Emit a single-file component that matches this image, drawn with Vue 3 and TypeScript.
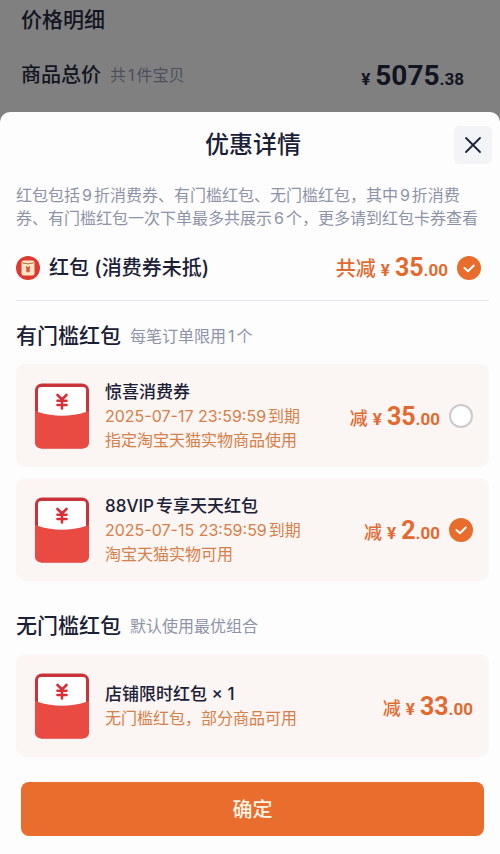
<script setup lang="ts">
import { ref } from 'vue'

interface Coupon {
  id: string
  title: string
  lines: string[]
  whole: string
  cents: string
}

const thresholdCoupons: Coupon[] = [
  {
    id: 'surprise',
    title: '惊喜消费券',
    lines: ['2025-07-17 23:59:59到期', '指定淘宝天猫实物商品使用'],
    whole: '35',
    cents: '.00',
  },
  {
    id: 'vip',
    title: '88VIP专享天天红包',
    lines: ['2025-07-15 23:59:59到期', '淘宝天猫实物可用'],
    whole: '2',
    cents: '.00',
  },
]

const openCoupons: Coupon[] = [
  {
    id: 'shop',
    title: '店铺限时红包 × 1',
    lines: ['无门槛红包，部分商品可用'],
    whole: '33',
    cents: '.00',
  },
]

const useRedPacket = ref(true)
const selected = ref('vip')
</script>

<template>
  <div class="screen">
    <section class="summary">
      <h2 class="summary-title">价格明细</h2>
      <div class="summary-row">
        <span class="summary-label">商品总价</span>
        <span class="summary-count">共1件宝贝</span>
        <span class="price total"><span class="yen">¥</span><span class="whole">5075</span><span class="cents">.38</span></span>
      </div>
    </section>

    <main class="sheet">
      <header class="sheet-head">
        <h1>优惠详情</h1>
        <button class="close" type="button" aria-label="关闭">
          <svg width="18" height="18" viewBox="0 0 18 18" fill="none" stroke="#1c2338" stroke-width="1.800" stroke-linecap="round">
            <path d="M2 2 16 16M16 2 2 16" />
          </svg>
        </button>
      </header>

      <p class="note">红包包括9折消费券、有门槛红包、无门槛红包，其中9折消费券、有门槛红包一次下单最多共展示6个，更多请到红包卡券查看</p>

      <label class="packet-row">
        <svg class="packet-icon" width="24" height="24" viewBox="0 0 24 24">
          <circle cx="12" cy="12" r="12" fill="#dc3a30" />
          <rect x="5.500" y="4.500" width="13" height="15" rx="2" fill="#fde6c4" />
          <path d="M6 6.800Q12 9 18 6.800" fill="none" stroke="#b5683f" stroke-width="1" />
          <path d="M10 10.500 12 12.600 14 10.500M12 12.600V16.500M10 13H14M10 14.900H14" fill="none" stroke="#dc3a30" stroke-width="1.200" />
        </svg>
        <span class="packet-name">红包 (消费券未抵)</span>
        <span class="price large"><span class="verb">共减</span><span class="yen">¥</span><span class="whole">35</span><span class="cents">.00</span></span>
        <span class="tick">
          <input v-model="useRedPacket" type="checkbox" />
          <svg v-if="useRedPacket" viewBox="0 0 24 24"><path d="M7.500 12 11 15.200 16.800 9.500" /></svg>
        </span>
      </label>

      <section class="group">
        <div class="group-head">
          <h2>有门槛红包</h2>
          <span>每笔订单限用1个</span>
        </div>
        <label v-for="c in thresholdCoupons" :key="c.id" class="card">
          <svg class="envelope" width="56" height="66" viewBox="0 0 56 66">
            <rect x="1" y="0.500" width="54" height="65" rx="7" fill="#c9343a" />
            <path d="M1 28Q28 36 55 28V58.500Q55 65.500 48 65.500H8Q1 65.500 1 58.500Z" fill="#e94b43" />
            <path d="M4 7Q4 4 7 4H49Q52 4 52 7V29Q28 36.500 4 29Z" fill="#fff" />
            <path d="M23.500 12 28 16.500 32.500 12M28 17V25.500M23.500 17.800H32.500M23.500 22H32.500" fill="none" stroke="#d92f39" stroke-width="2.600" stroke-linecap="round" />
          </svg>
          <span class="info">
            <strong>{{ c.title }}</strong>
            <span v-for="line in c.lines" :key="line">{{ line }}</span>
          </span>
          <span class="price"><span class="verb">减</span><span class="yen">¥</span><span class="whole">{{ c.whole }}</span><span class="cents">{{ c.cents }}</span></span>
          <span class="tick">
            <input v-model="selected" type="radio" name="threshold" :value="c.id" />
            <svg v-if="selected === c.id" viewBox="0 0 24 24"><path d="M7.500 12 11 15.200 16.800 9.500" /></svg>
          </span>
        </label>
      </section>

      <section class="group">
        <div class="group-head">
          <h2>无门槛红包</h2>
          <span>默认使用最优组合</span>
        </div>
        <article v-for="c in openCoupons" :key="c.id" class="card">
          <svg class="envelope" width="56" height="66" viewBox="0 0 56 66">
            <rect x="1" y="0.500" width="54" height="65" rx="7" fill="#c9343a" />
            <path d="M1 28Q28 36 55 28V58.500Q55 65.500 48 65.500H8Q1 65.500 1 58.500Z" fill="#e94b43" />
            <path d="M4 7Q4 4 7 4H49Q52 4 52 7V29Q28 36.500 4 29Z" fill="#fff" />
            <path d="M23.500 12 28 16.500 32.500 12M28 17V25.500M23.500 17.800H32.500M23.500 22H32.500" fill="none" stroke="#d92f39" stroke-width="2.600" stroke-linecap="round" />
          </svg>
          <span class="info">
            <strong>{{ c.title }}</strong>
            <span v-for="line in c.lines" :key="line">{{ line }}</span>
          </span>
          <span class="price"><span class="verb">减</span><span class="yen">¥</span><span class="whole">{{ c.whole }}</span><span class="cents">{{ c.cents }}</span></span>
        </article>
      </section>

      <button class="confirm" type="button">确定</button>
    </main>
  </div>
</template>

<style>
body {
  background: #808080;
}
</style>

<style scoped>
.screen {
  display: flex;
  flex-direction: column;
  min-height: 100vh;
  box-sizing: border-box;
  background: #808080;
  color: #1a2036;
  font-family: Inter, "Noto Sans CJK SC", sans-serif;
  font-size: 16px;
  line-height: 24px;
  text-autospace: normal;
}
h1,
h2,
p {
  margin: 0;
  font-weight: 500;
}
.summary {
  padding: 4px 36px 18px 21px;
  color: #12141f;
}
.summary-title {
  font-size: 21px;
  line-height: 32px;
}
.summary-row {
  display: flex;
  align-items: center;
  gap: 9px;
  margin-top: 20px;
  height: 38px;
}
.summary-label {
  font-size: 20px;
  font-weight: 500;
}
.summary-count {
  color: #4c505c;
}
.price {
  display: flex;
  align-items: baseline;
  margin-left: auto;
  padding-top: 4px;
  color: #e26a31;
  font-family: Roboto, "Noto Sans CJK SC", sans-serif;
  font-weight: 700;
  white-space: nowrap;
}
.verb {
  margin-right: 5px;
  font-size: 18px;
  font-weight: 500;
}
.yen {
  margin-right: 5px;
  font-size: 17px;
}
.whole {
  font-size: 25px;
}
.cents {
  font-size: 17px;
}
.large .verb {
  font-size: 20px;
}
.total {
  color: #12141f;
}
.total .whole {
  font-size: 28px;
}
.sheet {
  flex: 1;
  padding: 14px 11px 18px 16px;
  border-radius: 10px 10px 0 0;
  background: #fdfdfd;
}
.sheet-head {
  display: grid;
  grid-template-columns: 36px 1fr 38px;
  align-items: center;
  margin: 0 -3px 20px 0;
}
.sheet-head h1 {
  grid-column: 2;
  font-size: 24px;
  line-height: 38px;
  text-align: center;
}
.close {
  display: grid;
  place-items: center;
  width: 38px;
  height: 38px;
  padding: 0;
  border: 0;
  border-radius: 5px;
  background: #f2f4f7;
}
.note {
  color: #8d93a8;
  font-weight: 400;
  line-height: 23px;
}
.packet-row {
  display: flex;
  align-items: center;
  height: 64px;
  padding: 6px 8px 0 0;
  border-bottom: 1px solid #e6e7ea;
}
.packet-name {
  margin-left: 9px;
  font-size: 20px;
  font-weight: 500;
}
.packet-row .price {
  padding-top: 2px;
}
.tick {
  display: grid;
  width: 24px;
  height: 24px;
  margin-left: 9px;
}
.tick input,
.tick svg {
  grid-area: 1 / 1;
  box-sizing: border-box;
  width: 24px;
  height: 24px;
  margin: 0;
}
.tick input {
  appearance: none;
  border: 2px solid #c9cacd;
  border-radius: 50%;
  background: #fff;
}
.tick input:checked {
  border-color: #e86d2c;
  background: #e86d2c;
}
.tick svg {
  fill: none;
  stroke: #fff;
  stroke-width: 2;
  stroke-linecap: round;
  stroke-linejoin: round;
  pointer-events: none;
}
.group {
  padding-top: 19px;
}
.group + .group {
  padding-top: 29px;
}
.group-head {
  display: flex;
  align-items: center;
  gap: 9px;
  height: 32px;
  margin-bottom: 12px;
}
.group-head h2 {
  font-size: 21px;
}
.group-head span {
  color: #8d93a8;
}
.card {
  display: flex;
  align-items: center;
  box-sizing: border-box;
  min-height: 103px;
  padding: 10px 16px 10px 18px;
  border-radius: 9px;
  background: #fbf5f3;
}
.card + .card {
  margin-top: 11px;
}
.envelope {
  flex: none;
}
.info {
  display: flex;
  flex-direction: column;
  margin-left: 15px;
  color: #d68049;
}
.info strong {
  color: #1a2036;
  font-size: 17px;
  font-weight: 500;
}
.confirm {
  display: block;
  width: calc(100% - 10px);
  height: 54px;
  margin: 25px 5px 0;
  padding: 2px 0 0;
  border: 0;
  border-radius: 8px;
  background: #e96d2c;
  color: #fff4e4;
  font: inherit;
  font-size: 20px;
  font-weight: 500;
}
</style>
